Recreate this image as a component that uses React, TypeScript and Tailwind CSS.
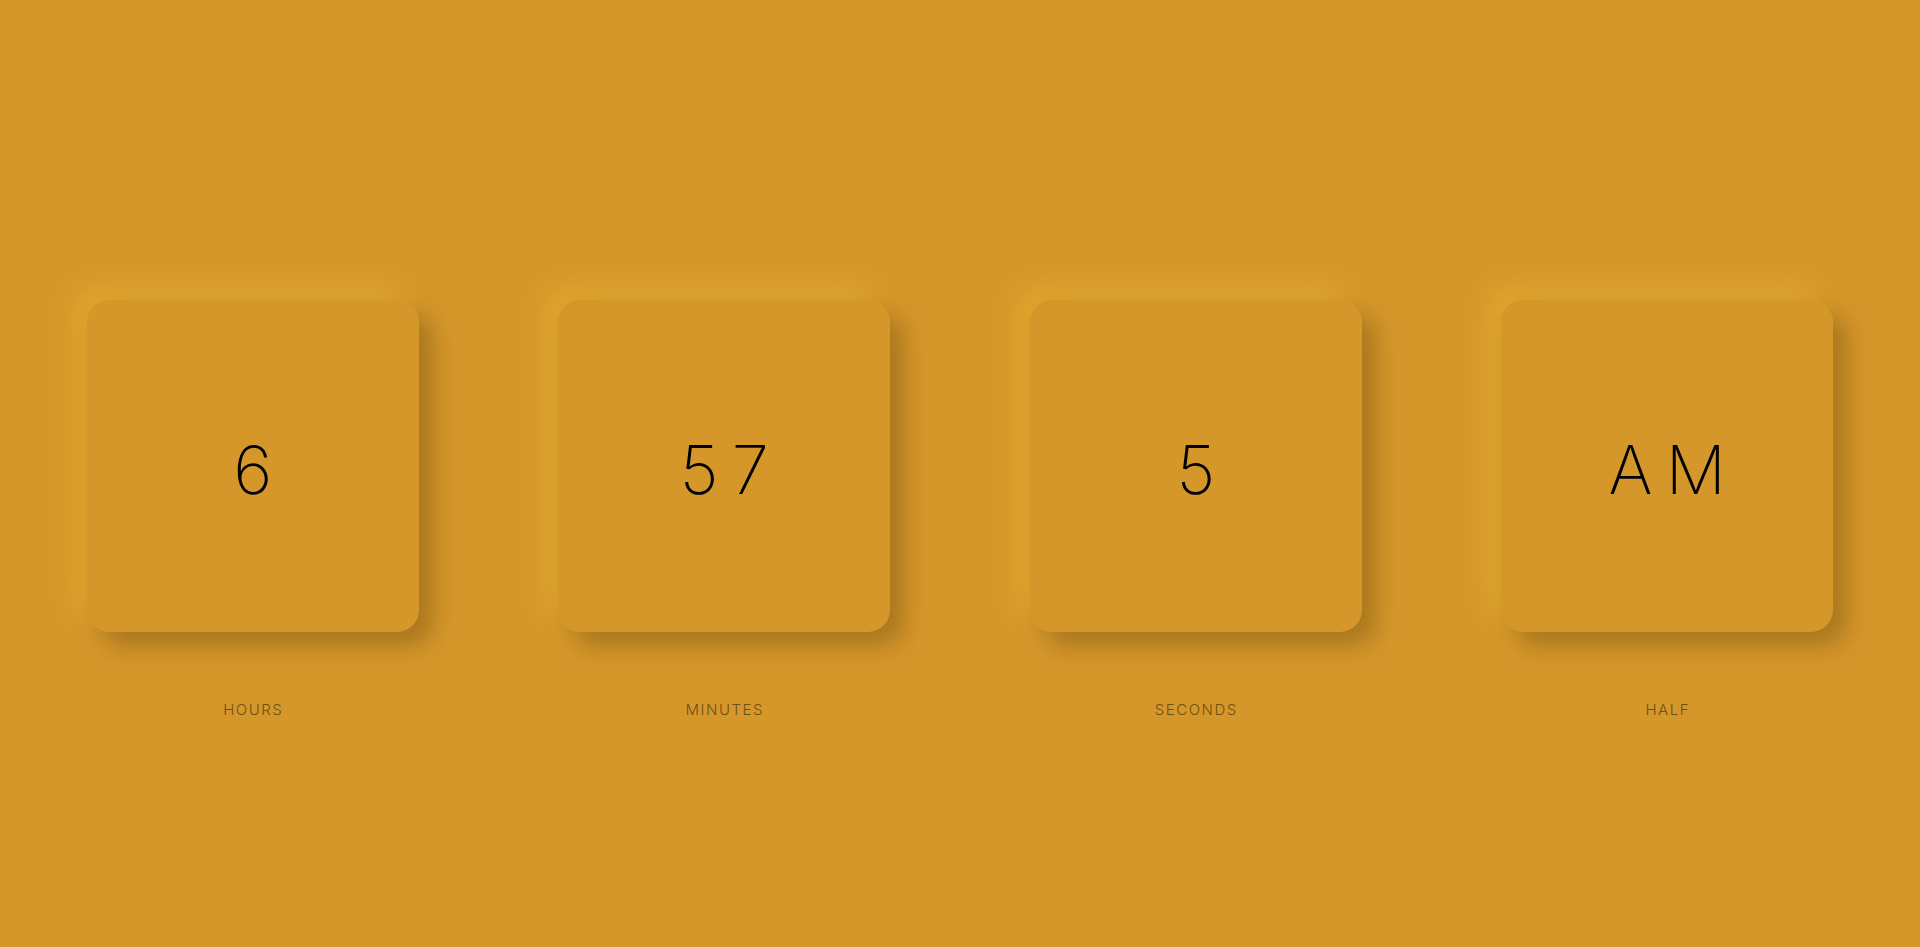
const units = [
  { value: '6', label: 'HOURS' },
  { value: '57', label: 'MINUTES' },
  { value: '5', label: 'SECONDS' },
  { value: 'AM', label: 'HALF' },
]

export default function App() {
  return (
    <div className="min-h-screen w-full bg-[#d6972a] px-[17px] pt-[300px] font-['Inter',sans-serif]">
      <div className="grid grid-cols-4">
        {units.map((u) => (
          <div key={u.label} className="flex flex-col items-center">
            <div className="flex h-[332px] w-[332px] items-center justify-center rounded-[22px] bg-[#d6972a] pt-[6px] shadow-[14px_14px_24px_#a8771f,-14px_-14px_24px_#dea52e]">
              <span className="pl-[0.2em] text-[67px] font-extralight leading-none tracking-[0.2em] text-black">{u.value}</span>
            </div>
            <div className="mt-[68px] pl-[1px] text-[15px] font-light leading-5 tracking-[1.5px] text-[#6b5116]">{u.label}</div>
          </div>
        ))}
      </div>
    </div>
  )
}
